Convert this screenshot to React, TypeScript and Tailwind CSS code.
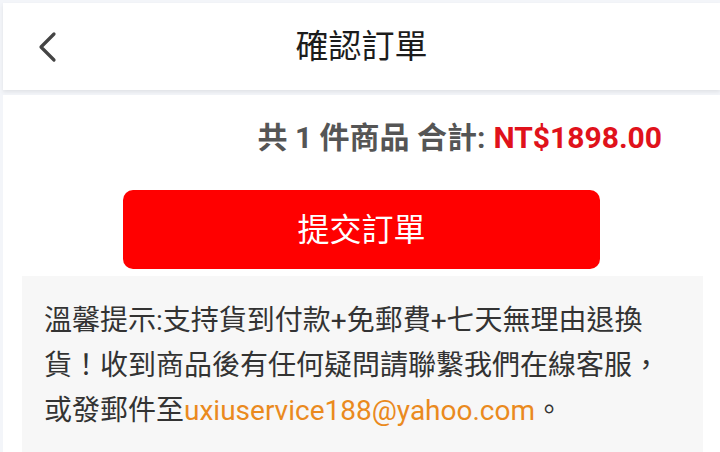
const font = { fontFamily: 'Roboto, "Noto Sans CJK TC", "Noto Sans", sans-serif' }

export default function App() {
  return (
    <div className="min-h-screen bg-[#f3f5f9] pl-[3px] pt-[3px]" style={font}>
      <div className="relative flex h-[87px] items-center justify-center bg-white shadow-[0_2px_4px_rgba(0,0,0,0.08)]">
        <button className="absolute left-[33px] top-[27px] flex h-[34px] w-[24px] items-center justify-center text-[#444]">
          <svg width="22" height="32" viewBox="0 0 22 32" fill="none" stroke="currentColor" strokeWidth="3.2" strokeLinecap="round" strokeLinejoin="round">
            <path d="M17 3 L4 16 L17 29" />
          </svg>
        </button>
        <h1 className="text-[33px] font-normal leading-none text-[#1c1c1c]">確認訂單</h1>
      </div>

      <div className="mt-[5px] min-h-[360px] bg-white pt-[25px]">
        <div className="flex justify-end pr-[58px] text-[30px] font-bold leading-[36px]">
          <span className="text-[#555]">共 1 件商品 合計:</span>
          <span className="ml-[8px] text-[#e0121b]">NT$1898.00</span>
        </div>

        <button className="mx-auto mt-[34px] flex h-[79px] w-[477px] items-center justify-center rounded-[10px] bg-[#ff0000] text-[32px] font-normal text-white">
          提交訂單
        </button>

        <div className="ml-[19px] mr-[17px] mt-[7px] bg-[#f7f7f7] pb-[30px] pl-[22px] pr-[10px] pt-[22px] text-[28px] leading-[45px] text-[#333]">
          <div className="whitespace-nowrap">溫馨提示:支持貨到付款+免郵費+七天無理由退換</div>
          <div className="whitespace-nowrap">貨！收到商品後有任何疑問請聯繫我們在線客服，</div>
          <div className="whitespace-nowrap">
            或發郵件至<span className="text-[#ea8a1e]">uxiuservice188@yahoo.com</span>。
          </div>
        </div>
      </div>
    </div>
  )
}
